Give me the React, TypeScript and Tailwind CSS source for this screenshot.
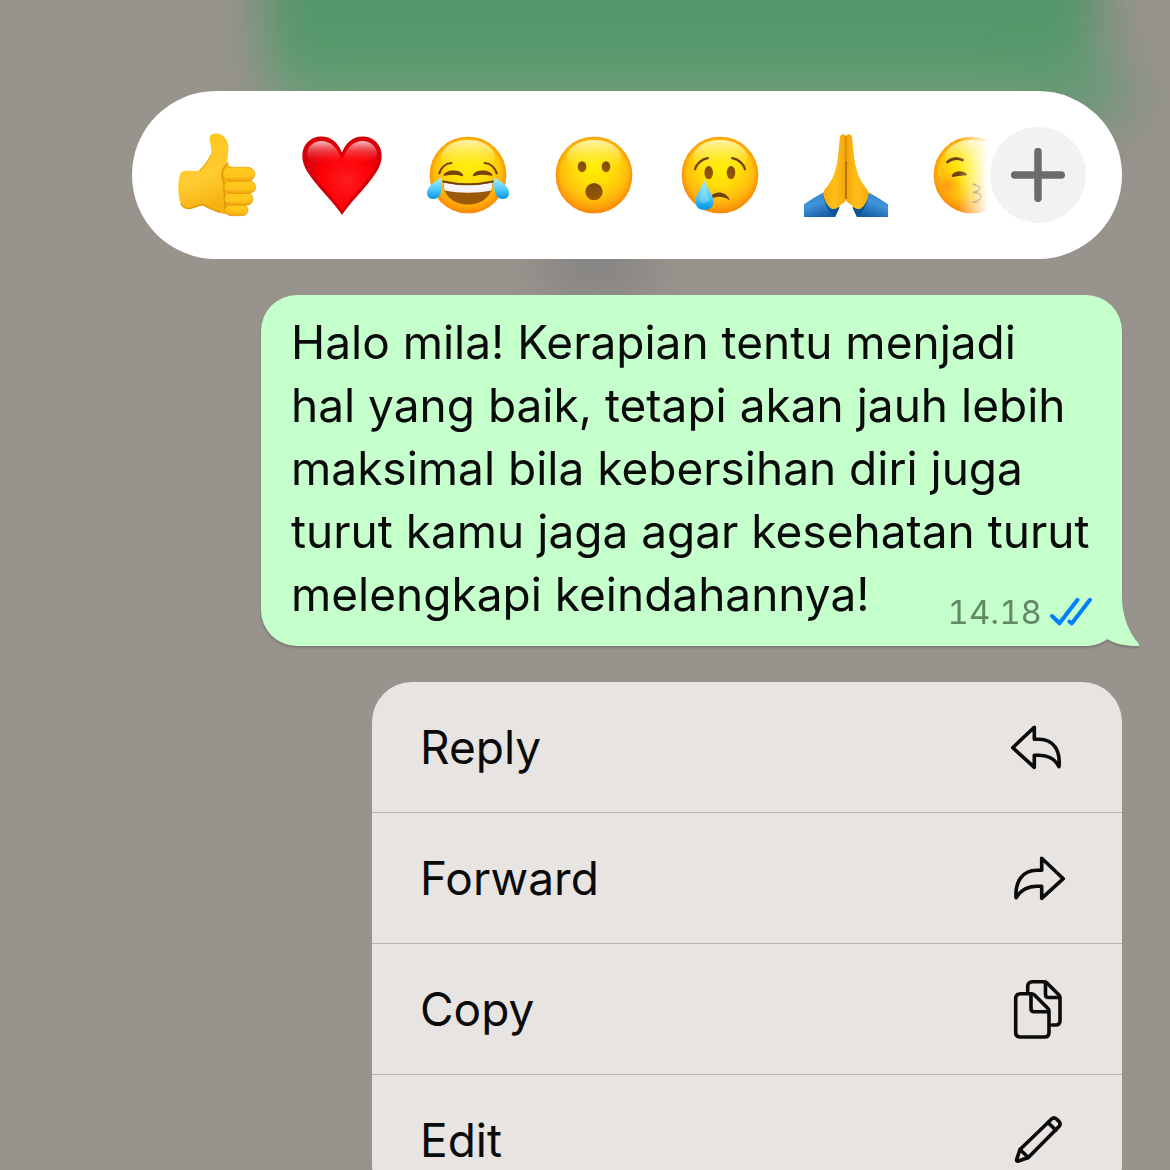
import type { ReactNode } from 'react';

function Defs() {
  return (
    <svg className="absolute h-0 w-0" aria-hidden="true">
      <defs>
        <radialGradient id="face" cx="50%" cy="38%" r="63%">
          <stop offset="0" stopColor="#ffee00" />
          <stop offset="0.4" stopColor="#ffdd08" />
          <stop offset="0.7" stopColor="#ffbe0c" />
          <stop offset="0.9" stopColor="#fd9a0a" />
          <stop offset="1" stopColor="#f58208" />
        </radialGradient>
        <radialGradient id="rim">
          <stop offset="0.88" stopColor="#f98f06" stopOpacity="0" />
          <stop offset="1" stopColor="#f98f06" stopOpacity="0.8" />
        </radialGradient>
        <linearGradient id="shine" x1="0" y1="0" x2="0" y2="1">
          <stop offset="0" stopColor="#fffbd8" stopOpacity="0.8" />
          <stop offset="0.5" stopColor="#fff67a" stopOpacity="0.35" />
          <stop offset="1" stopColor="#ffee00" stopOpacity="0" />
        </linearGradient>
        <linearGradient id="tear" x1="0" y1="0" x2="0" y2="1">
          <stop offset="0" stopColor="#a9edff" />
          <stop offset="0.55" stopColor="#4fcaf8" />
          <stop offset="1" stopColor="#0094e8" />
        </linearGradient>
        <radialGradient id="heart" cx="56%" cy="58%" r="60%">
          <stop offset="0" stopColor="#ff1c20" />
          <stop offset="0.6" stopColor="#fd0006" />
          <stop offset="1" stopColor="#d8000a" />
        </radialGradient>
        <linearGradient id="heartShine" x1="0" y1="0" x2="0" y2="1">
          <stop offset="0" stopColor="#fff" stopOpacity="0.75" />
          <stop offset="0.4" stopColor="#ffa0a0" stopOpacity="0.4" />
          <stop offset="1" stopColor="#ff2020" stopOpacity="0" />
        </linearGradient>
        <linearGradient id="hand" x1="0" y1="0" x2="0.3" y2="1">
          <stop offset="0" stopColor="#ffc414" />
          <stop offset="0.6" stopColor="#ffcc30" />
          <stop offset="1" stopColor="#f7b010" />
        </linearGradient>
        <linearGradient id="finger" x1="0" y1="0" x2="0" y2="1">
          <stop offset="0" stopColor="#ffca1e" />
          <stop offset="0.65" stopColor="#ffc31a" />
          <stop offset="1" stopColor="#eda00a" />
        </linearGradient>
        <linearGradient id="palmL" x1="0" y1="0" x2="1" y2="0">
          <stop offset="0" stopColor="#f7a90c" />
          <stop offset="0.5" stopColor="#ffc01a" />
          <stop offset="1" stopColor="#f4a60a" />
        </linearGradient>
        <linearGradient id="sleeve" x1="0" y1="0" x2="0.5" y2="1">
          <stop offset="0" stopColor="#2b7cc4" />
          <stop offset="0.5" stopColor="#4194da" />
          <stop offset="1" stopColor="#155fa6" />
        </linearGradient>
        <linearGradient id="iris" x1="0" y1="0" x2="0" y2="1">
          <stop offset="0" stopColor="#80480a" />
          <stop offset="1" stopColor="#9a5b06" />
        </linearGradient>
        <radialGradient id="blush">
          <stop offset="0" stopColor="#ff7a1a" stopOpacity="0.6" />
          <stop offset="1" stopColor="#ff9a1a" stopOpacity="0" />
        </radialGradient>
      </defs>
    </svg>
  );
}

function Emoji({ children }: { children: ReactNode }) {
  return (
    <svg viewBox="0 0 84 84" className="size-[84px]" aria-hidden="true">
      {children}
    </svg>
  );
}

function Face({ children }: { children: ReactNode }) {
  return (
    <Emoji>
      <circle cx="42" cy="42" r="38.3" fill="url(#face)" />
      <circle cx="42" cy="42" r="38.3" fill="url(#rim)" />
      <ellipse cx="42" cy="24" rx="27" ry="17" fill="url(#shine)" />
      {children}
    </Emoji>
  );
}

const line = { fill: 'none', stroke: '#71400a', strokeLinecap: 'round', strokeLinejoin: 'round' } as const;

function Thumb() {
  return (
    <Emoji>
      <path
        d="M9.500 38.200C14 37 20 38.800 25.300 37.700C29 34 34 27 36.700 22C38.500 15 35.500 9 35.500 5C36 1.500 39.500 .3 42.700 .5C48 1 53 5 54.300 12C55 19 53 25 53.500 30.500C55 33.500 58 34 60 35L66 58L62 81C56 82 50 81 46 79.700C39 78 34 75 28.500 72C23 73 19 76 14.300 76C10 75 7 73 6.700 70.300C3.500 62 3.500 47 6.500 40.500C7 39 8 38.500 9.500 38.200Z"
        fill="url(#hand)"
      />
      <path d="M6.700 70.300C9 75 12 75.500 14.300 75.500C19 75.500 23 72.500 28.500 71.500C34 74.500 39 77.500 46 79.200" fill="none" stroke="#e49a08" strokeWidth="1.400" />
      <path d="M25.300 38.200C30 33.500 34.500 27.500 37.200 22" fill="none" stroke="#f2ae10" strokeWidth="1.400" />
      <path d="M54 30C52.500 32.500 49.500 34 48.500 38C47.500 44 49 47 50 49L51 75" fill="none" stroke="#e2980a" strokeWidth="1.800" />
      <rect x="51.500" y="71.500" width="22.500" height="11.200" rx="5.500" fill="url(#finger)" stroke="#e09408" strokeWidth="0.600" />
      <rect x="50.300" y="60" width="28.700" height="12.200" rx="6" fill="url(#finger)" stroke="#e09408" strokeWidth="0.600" />
      <rect x="50" y="47.800" width="31.600" height="12.600" rx="6.200" fill="url(#finger)" stroke="#e09408" strokeWidth="0.600" />
      <rect x="48.700" y="34.300" width="32.200" height="14" rx="7" fill="url(#finger)" stroke="#e09408" strokeWidth="0.600" />
    </Emoji>
  );
}

function Heart() {
  return (
    <Emoji>
      <path
        d="M42 82C35 71 24 61 14 48C7 39 2.300 32 2.300 22.500C2.300 11 11 3.500 21.500 3.500C31 3.500 38 9.500 42 19.500C46 9.500 53 3.500 62.500 3.500C73 3.500 81.700 11 81.700 22.500C81.700 32 77 39 70 48C60 61 49 71 42 82Z"
        fill="#d4000a"
      />
      <path
        d="M42 78C36 68 26 58 17 46C10.500 37.500 6 31 6 22.500C6 13 13 7 21.500 7C31 7 38 13 42 25C46 13 53 7 62.500 7C71 7 78 13 78 22.500C78 31 73.500 37.500 67 46C58 58 48 68 42 78Z"
        fill="url(#heart)"
      />
      <path d="M7 22C7 13 14 8 21.500 8C30 8 37 14 41 26C36 33 14 36 7 22Z" fill="url(#heartShine)" />
      <path d="M77 22C77 13 70 8 62.500 8C54 8 47 14 43 26C48 33 70 36 77 22Z" fill="url(#heartShine)" />
    </Emoji>
  );
}

function Joy() {
  return (
    <Face>
      <path d="M13.300 40.300C15 35 19.500 30.500 25.300 30M70.700 40.300C69 35 64.500 30.500 58.700 30" {...line} strokeWidth="2.200" />
      <path d="M18.500 42C21 37.500 33 36.500 36.300 42.300C31 40.500 24 40.500 18.500 42ZM65.500 42C63 37.500 51 36.500 47.700 42.300C53 40.500 60 40.500 65.500 42Z" fill="#8a5006" stroke="#71400a" strokeWidth="1.800" strokeLinejoin="round" />
      <path d="M17 48.500C33 52 51 52 67 48.500C67 62 57 71.500 42 71.500C27 71.500 17 62 17 48.500Z" fill="#99580a" />
      <path d="M17.500 49.500C33 52.500 51 52.500 66.500 49.500C66.500 53 66 55.500 65 57.500C51 60.500 33 60.500 19 57.500C18 55.500 17.500 53 17.500 49.500Z" fill="#f5f3f5" />
      <path d="M17 48.500C33 52 51 52 67 48.500" {...line} strokeWidth="1.800" />
      <path d="M15.500 45C7 49 1 54 1 60C1 64 4 66 7.500 66C15 65.500 17 57 15.500 45Z" fill="url(#tear)" />
      <path d="M68.500 45C77 49 83 54 83 60C83 64 80 66 76.500 66C69 65.500 67 57 68.500 45Z" fill="url(#tear)" />
    </Face>
  );
}

function Wow() {
  return (
    <Face>
      <ellipse cx="30" cy="33.700" rx="4.300" ry="5.500" fill="url(#iris)" />
      <ellipse cx="54" cy="33.700" rx="4.300" ry="5.500" fill="url(#iris)" />
      <circle cx="42" cy="58.700" r="8.600" fill="url(#iris)" />
    </Face>
  );
}

function Cry() {
  return (
    <Face>
      <ellipse cx="30.700" cy="39.700" rx="4.300" ry="6.600" fill="url(#iris)" />
      <ellipse cx="53" cy="39.700" rx="4.300" ry="6.600" fill="url(#iris)" />
      <path d="M17 36.300C18.500 30.500 24 26 29.800 25.200M67 36.300C65.500 30.500 60 26 54.200 25.200" {...line} strokeWidth="2.200" />
      <path d="M34 62C39 57.500 49 59 52 67.500C47 63.500 39 62.500 34.500 65.500Z" fill="#71400a" />
      <path d="M26.300 47C23 56 17.500 62 17.500 69C17.500 74 21.500 77 26.300 77C31.500 77 35.500 74 35.500 69C35.500 62 29.500 56 26.300 47Z" fill="url(#tear)" />
      <path d="M26.300 52C24 60 21.500 64 21.500 68C25 71 29 70 31.500 67C31 62 28 58 26.300 52Z" fill="#c4f3ff" opacity="0.300" />
    </Face>
  );
}

function PrayHalf() {
  return (
    <>
      <path d="M0 71.300C6 67 13 63 19.300 59.500L35.500 74.500L31 84H0Z" fill="url(#sleeve)" />
      <path d="M19.300 59.500C20 66 24 72 28 76L35.500 74.500L31 84C26 81 19 70 19.300 59.500Z" fill="#0f559a" />
      <path
        d="M42 3C40.500 .3 36.500 .8 36 4C35 12 34.500 20 33.500 27C32.500 30 33.500 31 32 34C31 38 30 42 28 46C25 52 21 55 19 60C20 67 23 73 28 76C32 76.500 35 74 37 71.500C39.500 70.500 42 68.500 42 66Z"
        fill="url(#palmL)"
      />
      <path d="M40 3V58" stroke="#f2a80e" strokeWidth="1" fill="none" />
    </>
  );
}

function Pray() {
  return (
    <Emoji>
      <PrayHalf />
      <g transform="matrix(-1 0 0 1 84 0)">
        <PrayHalf />
      </g>
      <path d="M42 3V30" stroke="#c87d08" strokeWidth="1" />
      <path d="M42 28V66" stroke="#a9640a" strokeWidth="1.600" />
    </Emoji>
  );
}

function Kiss() {
  return (
    <Face>
      <circle cx="18" cy="52" r="14" fill="url(#blush)" />
      <path d="M17.500 29C21 25.500 27.500 24.500 32.500 27" {...line} strokeWidth="2.800" />
      <path d="M22.500 43C25 38.500 33 38 36 41.500C32 41.300 27 41.800 22.500 43Z" fill="#71400a" stroke="#71400a" strokeWidth="2" strokeLinejoin="round" />
      <path d="M43.500 51C46 54 51 52 50 55.500C49 58.500 46 58 43.500 59.500C47 60 52 60.500 51 64C50 67.500 46 69.500 43.500 69" {...line} strokeWidth="1.600" />
    </Face>
  );
}

const reactions = [
  { label: 'Thumbs up', art: <Thumb /> },
  { label: 'Red heart', art: <Heart /> },
  { label: 'Tears of joy', art: <Joy /> },
  { label: 'Surprised', art: <Wow /> },
  { label: 'Crying', art: <Cry /> },
  { label: 'Folded hands', art: <Pray /> },
  { label: 'Kissing', art: <Kiss /> },
];

function MenuIcon({ children }: { children: ReactNode }) {
  return (
    <svg
      viewBox="0 0 56 64"
      className="h-16 w-14 shrink-0"
      fill="none"
      stroke="currentColor"
      strokeWidth="3.600"
      strokeLinecap="round"
      strokeLinejoin="round"
      aria-hidden="true"
    >
      {children}
    </svg>
  );
}

const actions = [
  {
    label: 'Reply',
    icon: <path d="M24.300 12.300L2.700 32.700L24.300 52.300V40.300H29C38 40.300 45 43.500 49 51.700C50.500 36 44 24.300 29 24.300H24.300Z" />,
  },
  {
    label: 'Forward',
    icon: <path d="M31.700 12.300L53.300 32.700L31.700 52.300V40.300H27C18 40.300 11 43.500 6 51.700C5 36 12 24.300 27 24.300H31.700Z" />,
  },
  {
    label: 'Copy',
    icon: (
      <>
        <path d="M17.700 14V9.500C17.700 6.500 19.500 4.700 22.500 4.700H34C35.500 4.700 36 5 37 6L48.500 17.500C49.500 18.500 50 19 50 20.500V43.500C50 46.500 48.500 48 45.500 48H42" />
        <path d="M35.500 5V17.500C35.500 19.500 36.500 20.500 38.500 20.500H49.500" />
        <path d="M21 16.700H10.500C7.500 16.700 5.700 18.500 5.700 21.500V55.500C5.700 58.500 7.500 60 10.500 60H34.500C37.500 60 39 58.500 39 55.500V34C39 32.500 38.500 32 37.500 31L24.500 18C23.500 17 22.500 16.700 21 16.700Z" />
        <path d="M21 17V31.500C21 33.700 22 34.700 24 34.700H38.500" />
      </>
    ),
  },
  {
    label: 'Edit',
    icon: (
      <>
        <path d="M10 41.500L38.300 14.200L41.500 11C43 9.700 45 9.700 46.500 11L49 13.600C50.300 15 50.300 17 49 18.500L18.300 49.500L8.500 53C7 53.500 6.200 52.700 6.700 51.300Z" />
        <path d="M38 14.500L45.800 22.200M10 41.500L18.300 49.500" />
      </>
    ),
  },
];

export default function App() {
  return (
    <main className="relative isolate flex h-screen flex-col items-end gap-9 overflow-hidden bg-[#99938d] pr-12 pl-6 pt-[91px] font-['Inter',sans-serif] text-[#0b0b0b]">
      <Defs />
      <div className="absolute -top-24 right-[70px] left-[266px] -z-10 h-[210px] rounded-[40px] bg-linear-to-b from-[#53976a] from-65% to-[#6ea379] blur-[26px]" />
      <div className="absolute top-16 right-8 -z-10 h-16 w-28 rounded-full bg-[#5b9872]/60 blur-[26px]" />
      <div className="absolute top-60 left-[540px] -z-10 h-14 w-28 rounded-full bg-[#858483] blur-[22px]" />

      <section aria-label="Reactions" className="flex h-[168px] w-full max-w-[990px] shrink-0 items-center rounded-full bg-white pr-9">
        <div className="flex min-w-0 flex-1 gap-[42px] overflow-hidden pl-[42px] [mask-image:linear-gradient(to_right,#000_calc(100%-32px),transparent_calc(100%-2px))]">
          {reactions.map((r) => (
            <button key={r.label} type="button" aria-label={r.label} className="shrink-0">
              {r.art}
            </button>
          ))}
        </div>
        <button type="button" aria-label="More reactions" className="grid size-24 shrink-0 place-items-center rounded-full bg-[#f2f2f2]">
          <svg viewBox="0 0 54 54" className="size-[54px]" stroke="#6a6c6d" strokeWidth="7.500" strokeLinecap="round" aria-hidden="true">
            <path d="M27 3.700V50.300M3.700 27H50.300" />
          </svg>
        </button>
      </section>

      <article className="relative w-full max-w-[861px] shrink-0 rounded-[36px] bg-[#c5ffcb] pt-4 pr-6 pb-5 pl-[30px] drop-shadow-[0_2px_1px_rgba(0,0,0,0.18)]">
        <svg viewBox="0 0 60 50" className="absolute right-[-18px] bottom-0 h-[50px] w-[60px]" aria-hidden="true">
          <path d="M4 0H42C42 20 49 37 59 48C60 49.500 59 50 57 50C45 50 36 48 27 43C20 48 12 50 4 50Z" fill="#c5ffcb" />
        </svg>
        <p className="text-[46px] leading-[63px]">
          Halo mila! Kerapian tentu menjadi
          <br />
          hal yang baik, tetapi akan jauh lebih
          <br />
          maksimal bila kebersihan diri juga
          <br />
          turut kamu jaga agar kesehatan turut
          <br />
          melengkapi keindahannya!
        </p>
        <div className="absolute right-[30px] bottom-4 flex items-center gap-2 text-[#628a67]">
          <time className="text-[33px] leading-9 tabular-nums">14.18</time>
          <svg viewBox="0 0 42 30" className="h-[30px] w-[42px] shrink-0" fill="none" stroke="#027ffc" strokeWidth="4" strokeLinecap="round" strokeLinejoin="round" aria-label="Read">
            <path d="M2 19L9.500 26.300L27.500 2.800M19.500 24.500L21.700 26.500L40 2.800" />
          </svg>
        </div>
      </article>

      <nav aria-label="Message actions" className="w-full max-w-[750px] shrink-0 overflow-hidden rounded-[40px] bg-[#e7e4e2]">
        <ul className="divide-y divide-[#b5b2b0]">
          {actions.map((a) => (
            <li key={a.label}>
              <button type="button" className="flex h-[130px] w-full items-center justify-between pr-14 pl-12 text-left text-[46px] leading-[63px]">
                {a.label}
                <MenuIcon>{a.icon}</MenuIcon>
              </button>
            </li>
          ))}
        </ul>
      </nav>
    </main>
  );
}
